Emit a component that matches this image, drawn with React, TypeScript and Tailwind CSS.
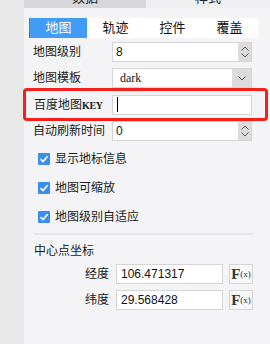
import React from "react";

const cjk = "font-['Liberation_Sans','Noto_Sans_CJK_SC',sans-serif]";

function Spinner() {
  return (
    <div className="flex w-[13px] flex-col items-center justify-center gap-[2px] bg-[#dcdcdc]">
      <svg width="8" height="5" viewBox="0 0 8 5" fill="none" stroke="#555" strokeWidth="1">
        <path d="M0.5 4.5 L4 1 L7.5 4.5" />
      </svg>
      <svg width="8" height="5" viewBox="0 0 8 5" fill="none" stroke="#555" strokeWidth="1">
        <path d="M0.5 0.5 L4 4 L7.5 0.5" />
      </svg>
    </div>
  );
}

function Check({ label }: { label: string }) {
  return (
    <div className="flex h-[29px] items-center pl-[14px]">
      <div className="flex h-[12px] w-[12px] items-center justify-center rounded-[1px] bg-[#3c8eec]">
        <svg width="10" height="10" viewBox="0 0 10 10" fill="none" stroke="#fff" strokeWidth="1.6">
          <path d="M1.5 5.2 L4 7.6 L8.6 2.2" />
        </svg>
      </div>
      <span className={`ml-[5px] text-[12px] text-[#1a1a1a] ${cjk}`}>{label}</span>
    </div>
  );
}

function Fx() {
  return (
    <div className="flex h-[20px] w-[24px] items-center justify-center border border-[#d4d4d4] bg-[#f7f7f7] font-['Liberation_Serif',serif] text-[#333]">
      <span className="text-[15px] font-bold leading-none">F</span>
      <span className="text-[9px] leading-none">(x)</span>
    </div>
  );
}

export default function App() {
  return (
    <div className="flex h-[344px] w-[270px] overflow-hidden bg-[#e8e8e8]">
      <div className="w-[24px] shrink-0" />
      <div className="flex w-[246px] flex-col bg-[#f4f4f6]">
        {/* 顶部 数据 / 样式 */}
        <div className={`flex h-[8px] overflow-hidden text-[13px] text-[#222] ${cjk}`}>
          <div className="flex w-[122px] justify-center bg-[#d7d7db]">
            <span className="-mt-[11px] leading-[18px]">数据</span>
          </div>
          <div className="flex flex-1 justify-center bg-[#efeff1]">
            <span className="-mt-[11px] leading-[18px]">样式</span>
          </div>
        </div>

        {/* tabs */}
        <div className={`ml-[5px] mt-[10px] flex h-[20px] w-[229px] border-l border-[#2f86e0] bg-white text-[13px] ${cjk}`}>
          <div className="flex flex-1 items-center justify-center bg-[#409cf6] text-white">地图</div>
          <div className="flex flex-1 items-center justify-center text-[#111]">轨迹</div>
          <div className="flex flex-1 items-center justify-center text-[#111]">控件</div>
          <div className="flex flex-1 items-center justify-center text-[#111]">覆盖</div>
        </div>

        {/* 地图级别 */}
        <div className="mt-[4px] flex h-[20px] items-center">
          <span className={`w-[88px] pl-[9px] text-[12px] text-[#1a1a1a] ${cjk}`}>地图级别</span>
          <div className="flex h-[20px] w-[140px] border border-[#d4d4d4] bg-white">
            <span className="flex-1 pl-[3px] font-['Liberation_Sans',sans-serif] text-[12px] leading-[18px] text-[#111]">8</span>
            <Spinner />
          </div>
        </div>

        {/* 地图模板 */}
        <div className="mt-[6px] flex h-[20px] items-center">
          <span className={`w-[88px] pl-[9px] text-[12px] text-[#1a1a1a] ${cjk}`}>地图模板</span>
          <div className="flex h-[20px] w-[140px] border border-[#d4d4d4] bg-white">
            <span className="flex-1 pl-[7px] font-['Liberation_Serif',serif] text-[12px] leading-[18px] text-[#111]">dark</span>
            <div className="flex w-[19px] items-center justify-center bg-[#dcdcdc]">
              <svg width="8" height="5" viewBox="0 0 8 5" fill="none" stroke="#555" strokeWidth="1">
                <path d="M0.5 0.5 L4 4 L7.5 0.5" />
              </svg>
            </div>
          </div>
        </div>

        {/* 百度地图KEY - highlighted */}
        <div className="-ml-[1px] flex h-[33px] w-[245px] items-center rounded-[4px] border-[3px] border-[#f5201c]">
          <span className={`w-[86px] pl-[8px] text-[12px] text-[#1a1a1a] ${cjk}`}>
            百度地图<span className="font-['Liberation_Serif',serif] text-[10px] font-bold tracking-[-0.4px]">KEY</span>
          </span>
          <div className="flex h-[20px] w-[140px] items-center border border-[#d4d4d4] bg-white pl-[4px]">
            <span className="h-[15px] w-px bg-black" />
          </div>
        </div>

        {/* 自动刷新时间 */}
        <div className="flex h-[20px] items-center">
          <span className={`w-[88px] pl-[9px] text-[12px] text-[#1a1a1a] ${cjk}`}>自动刷新时间</span>
          <div className="flex h-[20px] w-[140px] border border-[#d4d4d4] bg-white">
            <span className="flex-1 pl-[3px] font-['Liberation_Sans',sans-serif] text-[12px] leading-[18px] text-[#111]">0</span>
            <Spinner />
          </div>
        </div>

        <div className="mt-[3px]">
          <Check label="显示地标信息" />
          <Check label="地图可缩放" />
          <Check label="地图级别自适应" />
        </div>

        <div className="ml-[10px] mt-[2px] h-[2px] w-[219px] bg-[#e6e6e2]" />

        <div className={`mt-[8px] pl-[10px] text-[12px] leading-[16px] text-[#1a1a1a] ${cjk}`}>中心点坐标</div>

        {/* 经纬度 */}
        <div className="mt-[5px] flex flex-col gap-[6px]">
          {[
            ["经度", "106.471317"],
            ["纬度", "29.568428"],
          ].map(([k, v]) => (
            <div key={k} className="flex h-[20px] items-center">
              <span className={`w-[85px] text-right text-[12px] text-[#1a1a1a] ${cjk}`}>{k}</span>
              <div className="ml-[7px] flex h-[20px] w-[107px] items-center border border-[#d4d4d4] bg-white pl-[4px] font-['Liberation_Sans',sans-serif] text-[12px] text-[#111]">
                {v}
              </div>
              <div className="ml-[6px]">
                <Fx />
              </div>
            </div>
          ))}
        </div>
      </div>
    </div>
  );
}
